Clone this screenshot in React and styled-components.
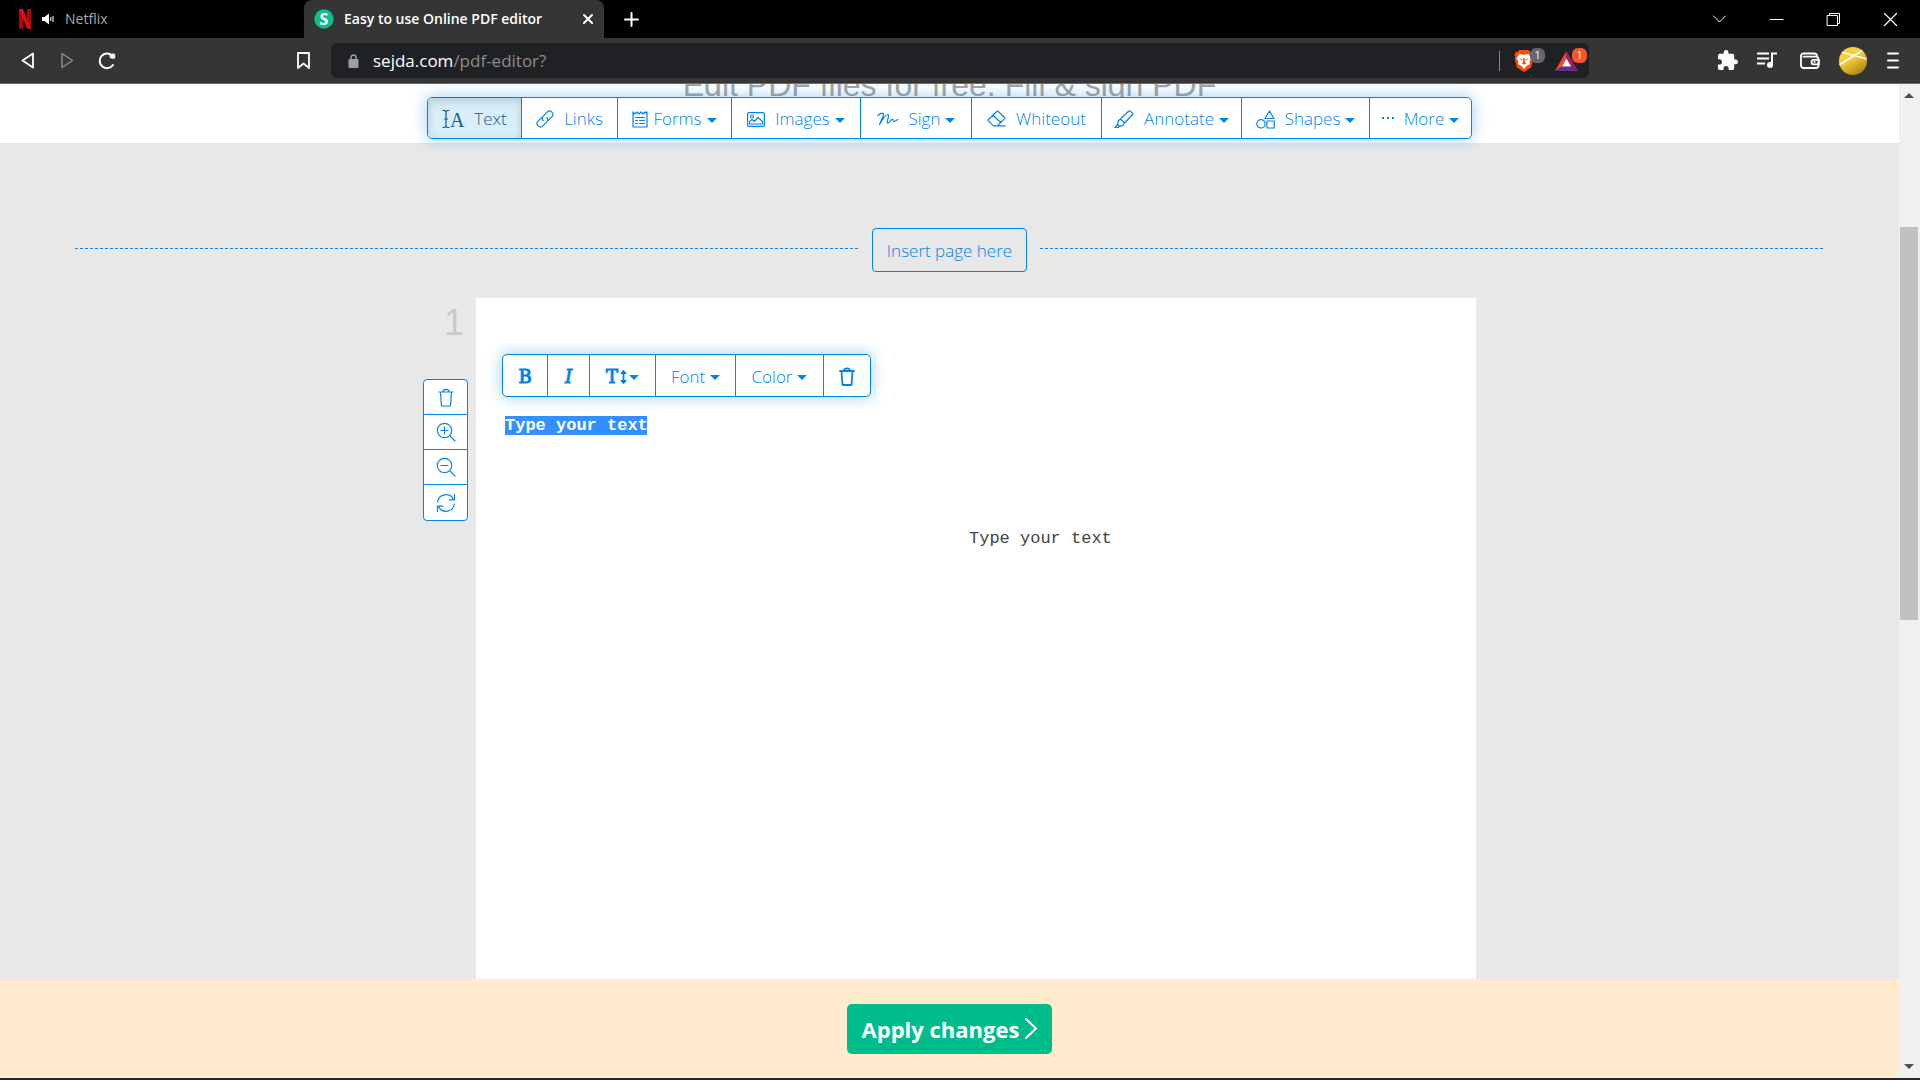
import React from "react";
import styled, { createGlobalStyle, css } from "styled-components";

const blue = "#0084e8";
const uiFont = '"Open Sans", "Noto Sans", sans-serif';

const GlobalStyle = createGlobalStyle`
  *, *::before, *::after { box-sizing: border-box; }
  html, body, #root { height: 100%; }
  body { margin: 0; overflow: hidden; font-family: ${uiFont}; }
  button { font: inherit; margin: 0; cursor: pointer; }
  svg { display: block; flex: none; overflow: visible; }
`;

/* ---------- browser chrome ---------- */

const Window = styled.div`
  height: 100vh;
  display: flex;
  flex-direction: column;
  border-bottom: 2px solid #27272a;
`;

const TabStrip = styled.div`
  flex: none;
  display: flex;
  height: 38px;
  background: #000;
  color: #fff;
`;

const Tab = styled.div`
  width: ${(p) => (p.$active ? 300 : 304)}px;
  display: flex;
  align-items: center;
  gap: ${(p) => (p.$active ? 10 : 11)}px;
  padding: 0 8px 1px ${(p) => (p.$active ? 10 : 19)}px;
  border-radius: 8px 8px 0 0;
  background: ${(p) => (p.$active ? "#353535" : "transparent")};
  color: ${(p) => (p.$active ? "#fff" : "#a8a8a8")};
  font-size: 14px;
  line-height: 18px;
  font-weight: ${(p) => (p.$active ? 600 : 400)};
  white-space: nowrap;
`;

const TabTitle = styled.span`
  flex: 1;
`;

const IconButton = styled.button`
  display: flex;
  align-items: center;
  justify-content: center;
  width: ${(p) => p.$w || 40}px;
  height: ${(p) => p.$h || 38}px;
  padding: 0;
  border: 0;
  background: none;
  color: ${(p) => (p.$dim ? "#8a8a8a" : "#fff")};
`;

const WindowControls = styled.div`
  display: flex;
  margin-left: auto;
  padding-right: 1px;
`;

const NavBar = styled.div`
  flex: none;
  display: flex;
  align-items: center;
  height: 46px;
  padding: 0 7px;
  background: #353535;
  border-bottom: 1px solid #6b6b6b;
  color: #fff;
`;

const NavGroup = styled.div`
  display: flex;
  align-items: center;
`;

const BookmarkGroup = styled(NavGroup)`
  margin-left: 156px;
`;

const AddressBar = styled.div`
  flex: 1;
  display: flex;
  align-items: center;
  height: 35px;
  margin-left: 8px;
  padding: 0 2px 0 17px;
  border-radius: 6px;
  background: #202124;
`;

const Url = styled.div`
  flex: 1;
  margin-left: 14px;
  font-size: 17px;
  line-height: 24px;
  color: #8a8c8f;
  white-space: nowrap;
  outline: none;
`;

const Host = styled.span`
  color: #fff;
`;

const Divider = styled.span`
  width: 1px;
  height: 20px;
  margin-right: 3px;
  background: #88898c;
`;

const ShieldButton = styled(IconButton)`
  position: relative;
`;

const Badge = styled.span`
  position: absolute;
  top: 5px;
  right: 0;
  width: 15px;
  height: 15px;
  border-radius: 6px;
  background: ${(p) => p.$color};
  color: #fff;
  font-size: 10px;
  line-height: 14px;
  text-align: center;
`;

const Extensions = styled(NavGroup)`
  margin-left: 118px;
`;

/* ---------- page ---------- */

const Viewport = styled.div`
  flex: 1;
  min-height: 0;
  display: flex;
`;

const Page = styled.main`
  flex: 1;
  min-width: 0;
  display: flex;
  flex-direction: column;
  overflow: hidden;
  background: #e8e8e8;
`;

const PageHeader = styled.header`
  flex: none;
  display: flex;
  flex-direction: column;
  align-items: center;
  padding-bottom: 4px;
  background: #fff;
`;

const Heading = styled.h1`
  margin: -19px 0 -8px;
  font: 400 32px/40px "Liberation Sans", Arial, sans-serif;
  color: #a4a4a4;
  white-space: nowrap;
`;

const ButtonGroup = styled.div`
  display: flex;
  border: 1px solid ${blue};
  border-radius: 5px;
  background: #fff;
  box-shadow: 0 0 16px rgba(0, 132, 232, 0.4);
`;

const MainTools = styled(ButtonGroup)`
  position: relative;
  height: 42px;
`;

const ToolButton = styled.button`
  display: flex;
  align-items: center;
  justify-content: center;
  gap: ${(p) => p.$gap ?? 10}px;
  width: ${(p) => p.$w}px;
  padding: 2px 0 0;
  border: 0;
  background: none;
  color: ${blue};
  font-size: 17px;
  font-weight: 300;
  line-height: 24px;
  white-space: nowrap;
  & + & { border-left: 1px solid ${blue}; }
  ${(p) =>
    p.$active &&
    css`
      border-radius: 4px 0 0 4px;
      background: #d9eef8;
      color: #0d5c96;
      box-shadow: inset 0 3px 8px rgba(0, 50, 80, 0.18);
    `}
`;

const Label = styled.span`
  display: flex;
  align-items: center;
  gap: 5px;
`;

const Glyph = styled.span`
  font-family: "DejaVu Serif", serif;
  font-size: 18px;
  font-weight: 400;
  font-style: ${(p) => (p.$italic ? "italic" : "normal")};
  -webkit-text-stroke: 1px ${blue};
`;

const Caret = styled.span`
  border: 5px solid transparent;
  border-top-color: currentColor;
  border-bottom: 0;
  margin-top: 2px;
`;

const Workspace = styled.section`
  flex: 1;
  min-height: 0;
  display: flex;
  flex-direction: column;
  padding-top: 85px;
`;

const InsertRow = styled.div`
  flex: none;
  display: flex;
  align-items: center;
  gap: 13px;
  padding: 0 75px;
  margin-bottom: 26px;
`;

const DashedLine = styled.hr`
  flex: 1;
  height: 1px;
  margin: 0 0 4px;
  border: 0;
  background: repeating-linear-gradient(90deg, ${blue} 0 3px, transparent 3px 5px);
`;

const InsertButton = styled.button`
  height: 44px;
  padding: 0 14px;
  border: 1px solid ${blue};
  border-radius: 4px;
  background: none;
  color: ${blue};
  font-size: 17px;
  font-weight: 300;
`;

const SheetRow = styled.div`
  flex: 1;
  min-height: 0;
  display: flex;
  justify-content: center;
  gap: 8px;
`;

const SideColumn = styled.div`
  width: 45px;
  display: flex;
  flex-direction: column;
`;

const PageNumber = styled.div`
  height: 81px;
  padding: 4px 4px 0 0;
  font: 36px/42px "Liberation Sans", Arial, sans-serif;
  color: #c9c9c9;
  text-align: right;
`;

const SideTools = styled.div`
  display: flex;
  flex-direction: column;
  border: 1px solid ${blue};
  border-radius: 4px;
  background: #fff;
`;

const SideButton = styled.button`
  display: flex;
  align-items: center;
  justify-content: center;
  height: 34px;
  padding: 0;
  border: 0;
  background: none;
  color: ${blue};
  & + & { height: 35px; border-top: 1px solid ${blue}; }
  &:last-child { height: 36px; }
`;

const Sheet = styled.div`
  position: relative;
  flex: 0 1 1000px;
  background: #fff;
`;

const TextTools = styled(ButtonGroup)`
  position: absolute;
  left: 26px;
  top: 56px;
  height: 43px;
`;

const TextBox = styled.input`
  position: absolute;
  left: ${(p) => p.$x}px;
  top: ${(p) => p.$y}px;
  width: 142px;
  height: 19px;
  padding: 0;
  border: 0;
  outline: none;
  background: ${(p) => (p.$selected ? "#3390ff" : "transparent")};
  color: ${(p) => (p.$selected ? "#fff" : "#444")};
  font: ${(p) => (p.$selected ? 700 : 400)} 17px/19px "Liberation Mono", "Courier New", monospace;
`;

const ApplyBar = styled.footer`
  flex: none;
  display: flex;
  align-items: center;
  justify-content: center;
  height: 99px;
  background: #ffebcd;
`;

const ApplyButton = styled.button`
  display: flex;
  align-items: center;
  gap: 6px;
  height: 50px;
  padding: 0 15px;
  border: 0;
  border-radius: 5px;
  background: #00bb8a;
  color: #fff;
  font-size: 22px;
  font-weight: 700;
`;

const Scrollbar = styled.div`
  flex: none;
  width: 21px;
  display: flex;
  flex-direction: column;
  align-items: center;
  padding: 9px 1px 9px 0;
  background: #f0f0f0;
`;

const Track = styled.div`
  flex: 1;
  width: 18px;
  display: flex;
  flex-direction: column;
  padding-top: 129px;
`;

const Thumb = styled.div`
  height: 47%;
  background: #c1c1c1;
`;

const Arrow = styled.span`
  border: 5px solid transparent;
  ${(p) =>
    p.$down
      ? "border-top-color: #505050; border-bottom: 0;"
      : "border-bottom-color: #505050; border-top: 0;"}
`;

/* ---------- icons ---------- */

function Line({ w = 20, h = w, box, sw = 1.2, children }) {
  return (
    <svg width={w} height={h} viewBox={box || `0 0 ${w} ${h}`} fill="none" stroke="currentColor"
      strokeWidth={sw} strokeLinecap="round" strokeLinejoin="round" aria-hidden="true">
      {children}
    </svg>
  );
}

const TextIcon = () => (
  <Line w={22} h={20}>
    <path d="M1 1.5h1.5l1.5 1 1.500-1H7M4 2.500v15M1 18.500h1.500l1.500-1 1.500 1H7M2.500 10h3" />
    <text x="8" y="18" fontFamily="Liberation Serif, serif" fontSize="20" fontWeight="400" fill="currentColor" stroke="none">A</text>
  </Line>
);
const LinkIcon = () => (
  <Line w={18} h={18}>
    <path d="M7.200 10.800a3.300 3.300 0 0 1 0-4.700l3.900-4a3.400 3.400 0 0 1 4.800 0 3.400 3.400 0 0 1 0 4.800l-3.500 3.500" />
    <path d="M10.800 7.200a3.300 3.300 0 0 1 0 4.700l-3.900 4a3.400 3.400 0 0 1-4.800 0 3.400 3.400 0 0 1 0-4.800l3.500-3.500" />
  </Line>
);
const FormIcon = () => (
  <Line w={16} h={17}>
    <path d="M1 1v15h14V1M1 1l2 2 2-2 2 2 2-2 2 2 2-2 1 1 1-1M3.500 6.500h9M3.500 9.500h2M7.500 9.500h5M3.500 12.500h2M7.500 12.500h5" />
  </Line>
);
const ImageIcon = () => (
  <Line w={18} h={15}>
    <rect x="0.600" y="0.600" width="16.800" height="13.800" rx="1.500" />
    <circle cx="5" cy="4.500" r="1.500" />
    <path d="M2.500 12V9.500L5 7.500l2.500 2L11 5.500l4.500 4V12z" />
  </Line>
);
const SignIcon = () => (
  <Line w={22} h={14}>
    <path d="M1 3.500C3 1.500 6 .5 6.500 1.800 7 3.500 4 8 2.500 12.500 5 8 9 2.500 11 2.500c2 .3-2 8-.5 8.700C12 11.600 14 7 15.500 7c1 .3 0 2.500 1 2.500 1.500 0 3-1.500 4.500-2" />
  </Line>
);
const EraserIcon = () => (
  <Line w={19} h={18}>
    <path d="m1.500 9.500 8.300-8a1 1 0 0 1 1.400 0l6.300 6a1 1 0 0 1 0 1.400l-7.300 7H6.500l-5-5a1 1 0 0 1 0-1.400zM6 5.300l8 7.500M6.500 15.900H18" />
  </Line>
);
const AnnotateIcon = () => (
  <Line w={20} h={19}>
    <path d="M6.500 9 14.500 1.300a1.500 1.500 0 0 1 2.200 0l1.500 1.500a1.500 1.500 0 0 1 0 2.200L10.500 13zM6.500 9 4.500 10.500 3.500 14.500l1.800 1.800 3.700-1 1.500-2.300M3.500 14.500l-2.500 3h3.200l1.100-1.200" />
  </Line>
);
const ShapesIcon = () => (
  <Line w={19} h={19}>
    <path d="M13.500 1 18 8.500H9z" />
    <circle cx="5" cy="13.800" r="4.200" />
    <rect x="11" y="11" width="7.300" height="7" />
  </Line>
);
const DotsIcon = () => (
  <svg width="12" height="8" fill="currentColor" aria-hidden="true">
    <rect x="0" y="2" width="2" height="2" /><rect x="5" y="2" width="2" height="2" /><rect x="10" y="2" width="2" height="2" />
  </svg>
);
const TrashIcon = ({ sw = 1.2 }) => (
  <Line w={16} h={19} sw={sw}>
    <path d="M1 4h14M5 4c0-1.800.8-2.700 3-2.700s3 .9 3 2.700M2.500 4.500l1 13.500h9l1-13.500" />
  </Line>
);
const ZoomIcon = ({ plus }) => (
  <Line w={20} h={20}>
    <circle cx="8.500" cy="8.500" r="7.200" />
    <path d="m13.700 13.700 5.300 5.300M5 8.500h7" />
    {plus && <path d="M8.500 5v7" />}
  </Line>
);
const RefreshIcon = () => (
  <Line w={20} h={20}>
    <path d="M1.600 9A8.400 8.400 0 0 1 17.500 6.500M18.400 11A8.400 8.400 0 0 1 2.500 13.500M18.500 1.500v5.300h-5.300M1.500 18.500v-5.300h5.300" />
  </Line>
);
const HeightIcon = () => (
  <Line w={7} h={16} sw={1.8}>
    <path d="M3.500 3v10" />
    <path d="m1 4.200 2.500-3 2.500 3zM1 11.800l2.500 3 2.500-3z" fill="currentColor" strokeWidth="1" />
  </Line>
);

const NetflixLogo = () => (
  <svg width="12" height="20" viewBox="0 0 12 20" aria-hidden="true">
    <path d="M0 0h4v19.500L0 20zM8 0h4v20l-4-.5z" fill="#b1060f" />
    <path d="M0 0h4l8 20-4-.5z" fill="#e50914" />
  </svg>
);
const SpeakerIcon = () => (
  <svg width="12" height="12" viewBox="0 0 12 12" aria-hidden="true">
    <path d="M0 4h2.500L7 .5v11L2.500 8H0z" fill="#fff" />
    <path d="M8.800 4v4M11 3v6" stroke="#ddd" strokeWidth="1.200" />
  </svg>
);
const SejdaLogo = () => (
  <svg width="20" height="20" viewBox="0 0 20 20" aria-hidden="true">
    <circle cx="10" cy="10" r="9.700" fill="#0fbd8c" />
    <text x="10" y="15.500" textAnchor="middle" fontFamily="Open Sans, sans-serif" fontSize="16" fontWeight="700" fill="#fff">S</text>
  </svg>
);
const BraveIcon = () => (
  <svg width="20" height="22" viewBox="0 0 20 22" aria-hidden="true">
    <path d="M5.500 0h9l1.800 2 1.700-.2L19.500 5l-.7 2 .5 2-2.300 8.500L10 22l-7-4.500L.7 9l.5-2-.7-2L2 1.800l1.700.2z" fill="#fb4e0b" />
    <path d="M5.500 4 10 4.800l4.500-.8 3 4.200-2 3.300.5 2.500-3.500 2L10 19l-2.500-3L4 14l.5-2.500-2-3.300z" fill="#fff" />
    <path d="m5 8.300 3.500.9-.7 1.300zM15 8.300l-3.500.9.700 1.300zM9.300 8h1.400l.3 4.300 1.300 1L10 14.700l-2.300-1.400 1.300-1z" fill="#fb4e0b" />
  </svg>
);
const BatIcon = () => (
  <svg width="23" height="20" viewBox="0 0 23 20" aria-hidden="true">
    <path d="M11.500 0 0 20l7-4.500 4.500-8z" fill="#ff4724" />
    <path d="M11.500 0 23 20l-7-4.500-4.500-8z" fill="#9e1f63" />
    <path d="M0 20h23l-7-4.500H7z" fill="#662d91" />
    <path d="m11.500 7.500 4.500 8H7z" fill="#fff" />
  </svg>
);
const PuzzleIcon = () => (
  <svg width="21" height="21" viewBox="1 1 22 22" fill="#fff" aria-hidden="true">
    <path d="M20.500 11H19V7a2 2 0 0 0-2-2h-4V3.500a2.500 2.500 0 0 0-5 0V5H4a2 2 0 0 0-2 2v3.800h1.500a2.700 2.700 0 0 1 0 5.400H2V20a2 2 0 0 0 2 2h3.800v-1.500a2.700 2.700 0 0 1 5.400 0V22H17a2 2 0 0 0 2-2v-4h1.500a2.500 2.500 0 0 0 0-5z" />
  </svg>
);
const PlaylistIcon = () => (
  <svg width="20" height="17" viewBox="0 0 20 17" aria-hidden="true">
    <path d="M0 1.500h12M0 6.500h12M0 11.500h8" stroke="#fff" strokeWidth="2" />
    <circle cx="13" cy="13" r="3" fill="#fff" />
    <path d="M15 13V1.500h5" fill="none" stroke="#fff" strokeWidth="2" />
  </svg>
);
const WalletIcon = () => (
  <Line w={20} h={17} sw={1.8}>
    <path d="M17 4.500V4a2.500 2.500 0 0 0-2.500-2.500h-11A2.500 2.500 0 0 0 1 4v9.500A2.500 2.500 0 0 0 3.500 16H16a2.500 2.500 0 0 0 2.500-2.500v-6A2.500 2.500 0 0 0 16 4.700H3.500" />
    <path d="M18.800 7.800h-5a2.300 2.300 0 0 0 0 4.600h5zM14.500 10h.1" />
  </Line>
);
const AvatarIcon = () => (
  <svg width="28" height="28" viewBox="0 0 28 28" aria-hidden="true">
    <defs>
      <linearGradient id="gold" x1="0.200" y1="0" x2="0.800" y2="1">
        <stop offset="0.400" stopColor="#f7cf3a" /><stop offset="1" stopColor="#a67c10" />
      </linearGradient>
      <clipPath id="disc"><circle cx="14" cy="14" r="14" /></clipPath>
    </defs>
    <g clipPath="url(#disc)">
      <rect width="28" height="28" fill="url(#gold)" />
      <path d="M0 18 24 3M2 5l26 7" stroke="#fff" strokeWidth="1.500" />
    </g>
  </svg>
);
const LockIcon = () => (
  <svg width="11" height="14" viewBox="0 0 11 14" aria-hidden="true">
    <rect x="0.500" y="5" width="10" height="9" rx="1" fill="#9aa0a6" />
    <path d="M3 6V3.500a2.500 2.500 0 0 1 5 0V6" fill="none" stroke="#9aa0a6" strokeWidth="1.500" />
  </svg>
);

/* ---------- app ---------- */

const mainTools = [
  { label: "Text", icon: <TextIcon />, w: 93, active: true },
  { label: "Links", icon: <LinkIcon />, w: 96 },
  { label: "Forms", icon: <FormIcon />, w: 114, menu: true, gap: 5 },
  { label: "Images", icon: <ImageIcon />, w: 129, menu: true },
  { label: "Sign", icon: <SignIcon />, w: 111, menu: true },
  { label: "Whiteout", icon: <EraserIcon />, w: 130 },
  { label: "Annotate", icon: <AnnotateIcon />, w: 140, menu: true },
  { label: "Shapes", icon: <ShapesIcon />, w: 128, menu: true },
  { label: "More", icon: <DotsIcon />, w: 102, menu: true },
];

export default function App() {
  return (
    <>
      <GlobalStyle />
      <Window>
        <TabStrip>
          <Tab>
            <NetflixLogo />
            <SpeakerIcon />
            <TabTitle>Netflix</TabTitle>
          </Tab>
          <Tab $active>
            <SejdaLogo />
            <TabTitle>Easy to use Online PDF editor</TabTitle>
            <IconButton $w={16} aria-label="Close tab">
              <Line w={10} sw={2}><path d="m1 1 8 8M9 1 1 9" /></Line>
            </IconButton>
          </Tab>
          <IconButton $w={54} aria-label="New tab">
            <Line w={15} sw={2}><path d="M7.500 1v13M1 7.500h13" /></Line>
          </IconButton>
          <WindowControls>
            <IconButton $w={57} aria-label="Search tabs">
              <Line w={13} h={8} sw={1}><path d="m.5 1 6 6 6-6" /></Line>
            </IconButton>
            <IconButton $w={57} aria-label="Minimize">
              <Line w={13} h={1} sw={1}><path d="M0 .5h13" /></Line>
            </IconButton>
            <IconButton $w={57} aria-label="Restore">
              <Line w={13} sw={1}><path d="M.5 2.500h10v10H.5zM2.500 2.500v-2h10v10h-2" /></Line>
            </IconButton>
            <IconButton $w={57} aria-label="Close">
              <Line w={13} sw={1.2}><path d="m.5.5 12 12M12.500.5l-12 12" /></Line>
            </IconButton>
          </WindowControls>
        </TabStrip>

        <NavBar>
          <NavGroup>
            <IconButton aria-label="Back">
              <Line w={13} h={17} sw={1.8}><path d="M12 1.500v14L1.500 8.500z" /></Line>
            </IconButton>
            <IconButton $dim aria-label="Forward">
              <Line w={13} h={17} sw={1.5}><path d="M1 1.500v14l10.500-7z" /></Line>
            </IconButton>
            <IconButton aria-label="Reload">
              <Line w={18} sw={2}>
                <path d="M15 13A7.300 7.300 0 1 1 14 3.500" />
                <path d="M12 2.500c2 0 3-1 4.500-.5.800 1.500.5 3 0 4.500-2 0-3 0-4-.5-.7-1-.8-2-.5-3.500z" fill="currentColor" strokeWidth="0.500" />
              </Line>
            </IconButton>
          </NavGroup>
          <BookmarkGroup>
            <IconButton aria-label="Bookmark">
              <Line w={13} h={17} sw={1.8}><path d="M1 1h11v15l-5.500-4.500L1 16z" /></Line>
            </IconButton>
          </BookmarkGroup>
          <AddressBar>
            <LockIcon />
            <Url role="textbox" aria-label="Address" contentEditable suppressContentEditableWarning spellCheck={false}>
              <Host>sejda.com</Host>/pdf-editor?
            </Url>
            <Divider />
            <ShieldButton $w={42} $h={35} aria-label="Shields">
              <BraveIcon />
              <Badge $color="#646672">1</Badge>
            </ShieldButton>
            <ShieldButton $w={42} $h={35} aria-label="Rewards">
              <BatIcon />
              <Badge $color="#fb542b">1</Badge>
            </ShieldButton>
          </AddressBar>
          <Extensions>
            <IconButton aria-label="Extensions"><PuzzleIcon /></IconButton>
            <IconButton aria-label="Media"><PlaylistIcon /></IconButton>
            <IconButton $w={46} aria-label="Wallet"><WalletIcon /></IconButton>
            <IconButton aria-label="Profile"><AvatarIcon /></IconButton>
            <IconButton aria-label="Menu">
              <Line w={12} h={17} sw={2}><path d="M1 1.500h10M1 8.500h10M1 15.500h10" /></Line>
            </IconButton>
          </Extensions>
        </NavBar>

        <Viewport>
          <Page>
            <PageHeader>
              <Heading>Edit PDF files for free. Fill &amp; sign PDF</Heading>
              <MainTools role="toolbar" aria-label="Editor tools">
                {mainTools.map((t) => (
                  <ToolButton key={t.label} $w={t.w} $gap={t.gap} $active={t.active}>
                    {t.icon}
                    <Label>{t.label}{t.menu && <Caret />}</Label>
                  </ToolButton>
                ))}
              </MainTools>
            </PageHeader>

            <Workspace>
              <InsertRow>
                <DashedLine />
                <InsertButton>Insert page here</InsertButton>
                <DashedLine />
              </InsertRow>
              <SheetRow>
                <SideColumn>
                  <PageNumber>1</PageNumber>
                  <SideTools>
                    <SideButton aria-label="Delete page"><TrashIcon /></SideButton>
                    <SideButton aria-label="Zoom in"><ZoomIcon plus /></SideButton>
                    <SideButton aria-label="Zoom out"><ZoomIcon /></SideButton>
                    <SideButton aria-label="Rotate"><RefreshIcon /></SideButton>
                  </SideTools>
                </SideColumn>
                <Sheet>
                  <TextTools role="toolbar" aria-label="Text formatting">
                    <ToolButton $w={44} aria-label="Bold"><Glyph>B</Glyph></ToolButton>
                    <ToolButton $w={42} aria-label="Italic"><Glyph $italic>I</Glyph></ToolButton>
                    <ToolButton $w={66} $gap={2} aria-label="Font size"><Glyph>T</Glyph><HeightIcon /><Caret /></ToolButton>
                    <ToolButton $w={80}><Label>Font<Caret /></Label></ToolButton>
                    <ToolButton $w={88}><Label>Color<Caret /></Label></ToolButton>
                    <ToolButton $w={47} aria-label="Delete text"><TrashIcon sw={1.8} /></ToolButton>
                  </TextTools>
                  <TextBox $x={29} $y={118} $selected defaultValue="Type your text" aria-label="Selected text" />
                  <TextBox $x={493} $y={231} defaultValue="Type your text" aria-label="Text" />
                </Sheet>
              </SheetRow>
            </Workspace>

            <ApplyBar>
              <ApplyButton>
                Apply changes
                <Line w={12} h={21} sw={2}><path d="m1 1 10 9.500L1 20" /></Line>
              </ApplyButton>
            </ApplyBar>
          </Page>
          <Scrollbar aria-hidden="true">
            <Arrow />
            <Track><Thumb /></Track>
            <Arrow $down />
          </Scrollbar>
        </Viewport>
      </Window>
    </>
  );
}
